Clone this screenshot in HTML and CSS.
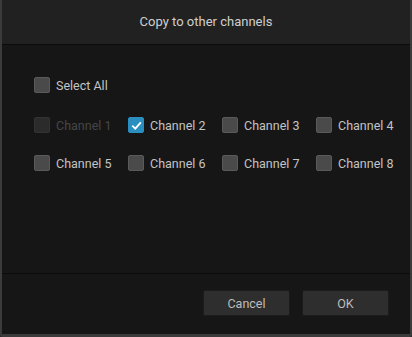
FILE: index.html
```html
<!DOCTYPE html>
<html lang="en">
<head>
<meta charset="UTF-8">
<meta name="viewport" content="width=device-width, initial-scale=1.0">
<title>Copy to other channels</title>
<link rel="stylesheet" href="styles.css">
</head>
<body>

<div class="dialog">
  <header class="dlg-head">Copy to other channels</header>

  <main class="dlg-body">
    <label class="check select-all"><span class="box"></span>Select All</label>
    <div class="channels">
      <label class="check disabled"><span class="box"></span>Channel 1</label>
      <label class="check on"><span class="box">
        <svg viewBox="0 0 16 16" width="16" height="16"><path d="M3.5 8.2 L6.7 11.3 L12.6 4.6" fill="none" stroke="#fff" stroke-width="2"/></svg>
      </span>Channel 2</label>
      <label class="check"><span class="box"></span>Channel 3</label>
      <label class="check"><span class="box"></span>Channel 4</label>
      <label class="check"><span class="box"></span>Channel 5</label>
      <label class="check"><span class="box"></span>Channel 6</label>
      <label class="check"><span class="box"></span>Channel 7</label>
      <label class="check"><span class="box"></span>Channel 8</label>
    </div>
  </main>

  <footer class="dlg-foot">
    <button class="btn">Cancel</button>
    <button class="btn">OK</button>
  </footer>
</div>

</body>
</html>
```

FILE: styles.css
```css
body {
  margin: 0;
  background: #2a2a2a;
  font-family: Roboto, "Noto Sans", sans-serif;
  color: #c4c4c4;
}
.dialog {
  height: 334px;
  border: 2px solid #3b3b3b;
  border-top: none;
  border-bottom-width: 3px;
  border-radius: 0 0 3px 3px;
  background: #161616;
  display: flex;
  flex-direction: column;
}
.dlg-head {
  height: 44px;
  line-height: 44px;
  text-align: center;
  font-size: 13px;
  background: #212121;
  border-bottom: 1px solid #0b0b0b;
  color: #cfcfcf;
}
.dlg-body {
  flex: 1;
  padding: 32px 0 0 32px;
}
.check {
  display: flex;
  align-items: center;
  gap: 6px;
  font-size: 12.5px;
  height: 16px;
  cursor: pointer;
}
.box {
  width: 14px;
  height: 14px;
  background: #4a4a4a;
  border: 1px solid #5a5a5a;
  border-radius: 2px;
  display: flex;
  align-items: center;
  justify-content: center;
}
.box svg { width: 15px; height: 15px; flex: none; }
.check.on .box { background: #2b8ec0; border-color: #2b8ec0; }
.check.disabled { color: #464646; }
.check.disabled .box { background: #2b2b2b; border-color: #333; }
.select-all { margin-bottom: 24px; }
.channels {
  display: grid;
  grid-template-columns: repeat(4, 94px);
  row-gap: 22px;
}
.dlg-foot {
  height: 61px;
  border-top: 1px solid #0b0b0b;
  display: flex;
  justify-content: flex-end;
  gap: 12px;
  padding: 16px 21px 0 0;
  box-sizing: border-box;
}
.btn {
  width: 87px;
  height: 26px;
  background: #2e2e2e;
  border: 1px solid #1c1c1c;
  border-radius: 2px;
  color: #bdbdbd;
  font-family: Roboto, "Noto Sans", sans-serif;
  font-size: 12.5px;
  cursor: pointer;
}
```
